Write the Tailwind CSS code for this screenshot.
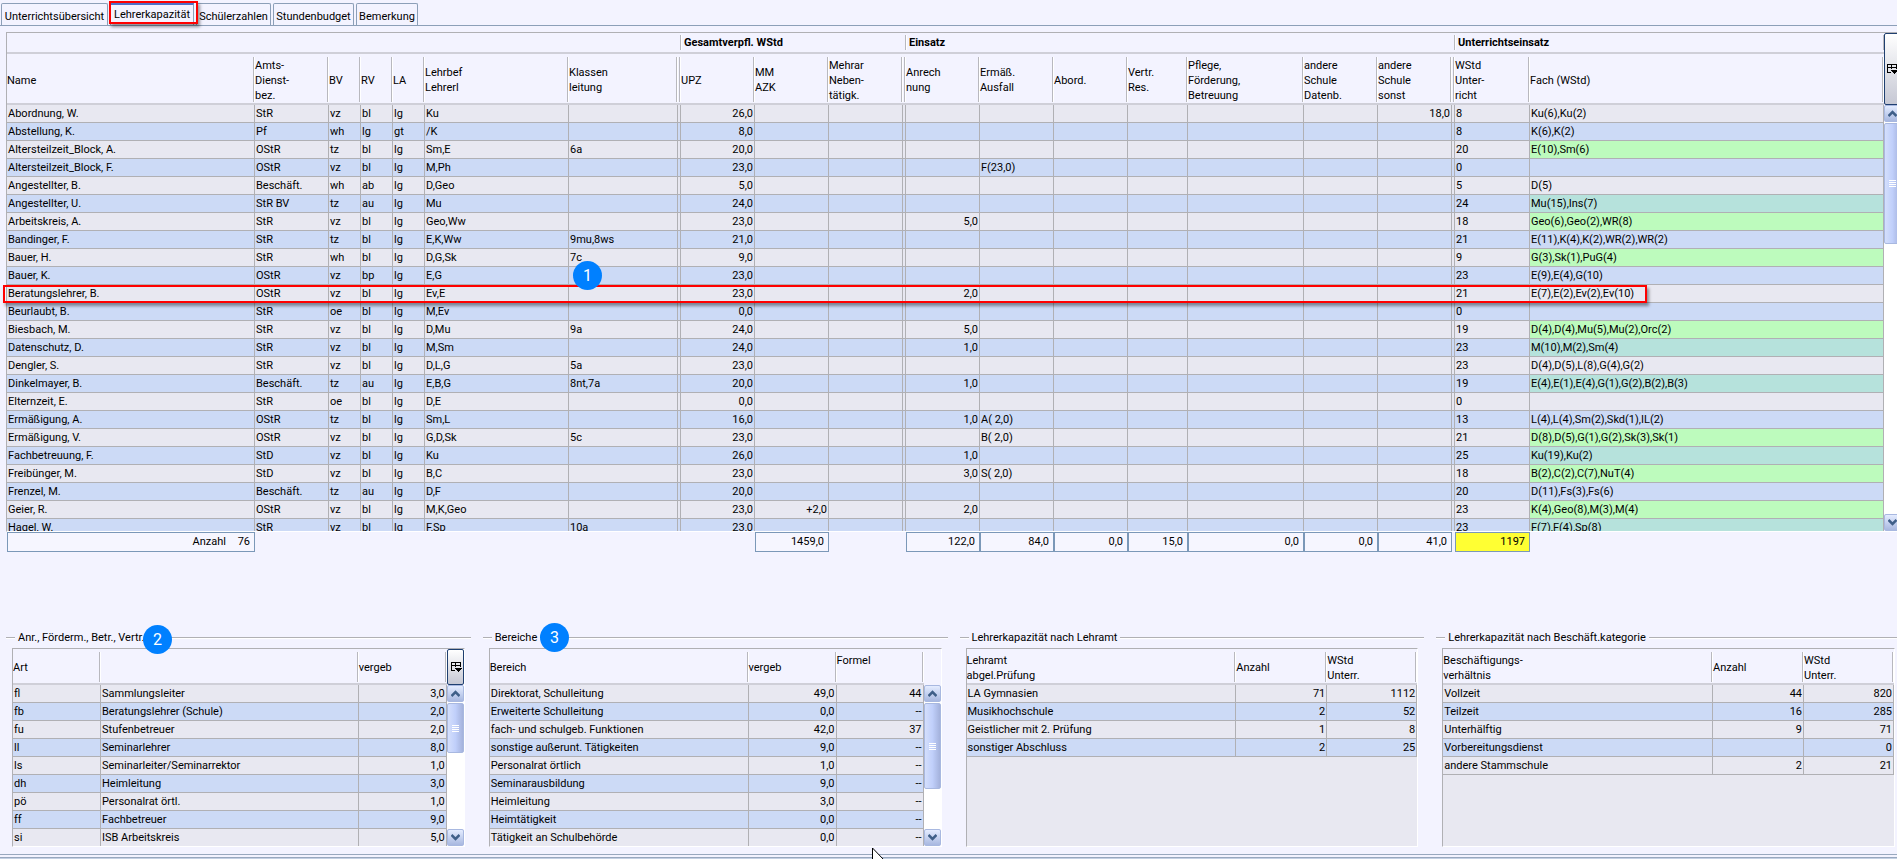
<!DOCTYPE html>
<html lang="de">
  <head>
    <meta charset="UTF-8" />
    <meta name="viewport" content="width=device-width, initial-scale=1.0" />
    <title>Lehrerkapazität</title>
    <script src="https://cdn.jsdelivr.net/npm/@tailwindcss/browser@4"></script>
  </head>
  <body class="min-h-screen overflow-hidden bg-[#f3f3ff] font-[Roboto,sans-serif] text-[11px] leading-[15px] text-black">
    <div class="relative flex min-h-screen flex-col overflow-hidden">
      <!-- tabs -->
      <div role="tablist" class="flex h-[26px] items-end gap-[2px] border-b border-[#8c9fb8] pl-px">
        <button role="tab" class="h-[22px] w-[107px] rounded-t-xs border border-b-0 border-[#8c9fb8] pt-[3px] whitespace-nowrap">Unterrichtsübersicht</button>
        <div class="relative">
          <button role="tab" aria-selected="true" class="h-[22px] w-[84px] border border-t-2 border-b-0 border-[#8c9fb8] border-t-[#5070c8] pb-[2px] whitespace-nowrap">Lehrerkapazität</button>
          <div class="absolute -top-[2px] -left-px h-[23px] w-[89px] border-2 border-[#f00] shadow-[2px_3px_3px_rgba(0,0,0,0.4)]"></div>
        </div>
        <button role="tab" class="h-[22px] w-[75px] rounded-t-xs border border-b-0 border-[#8c9fb8] pt-[3px] whitespace-nowrap">Schülerzahlen</button>
        <button role="tab" class="h-[22px] w-[81px] rounded-t-xs border border-b-0 border-[#8c9fb8] pt-[3px] whitespace-nowrap">Stundenbudget</button>
        <button role="tab" class="h-[22px] w-[62px] rounded-t-xs border border-b-0 border-[#8c9fb8] pt-[3px] whitespace-nowrap">Bemerkung</button>
      </div>

      <!-- teacher list -->
      <div class="mt-[6px] ml-[6px] flex h-[500px] overflow-hidden border-t border-b border-l border-[#b0b0b4] border-b-white">
        <div class="min-w-0 flex-1">
          <table class="w-full table-fixed border-separate border-spacing-0">
            <colgroup>
              <col class="w-[248px]" /><col class="w-[74px]" /><col class="w-[32px]" /><col class="w-[32px]" /><col class="w-[32px]" /><col class="w-[144px]" /><col class="w-[109px]" />
              <col class="w-[3px]" />
              <col class="w-[74px]" /><col class="w-[74px]" /><col class="w-[74px]" />
              <col class="w-[3px]" />
              <col class="w-[74px]" /><col class="w-[74px]" /><col class="w-[74px]" /><col class="w-[60px]" /><col class="w-[116px]" /><col class="w-[74px]" /><col class="w-[74px]" />
              <col class="w-[3px]" />
              <col class="w-[75px]" /><col />
            </colgroup>
            <thead id="staff-head"></thead>
            <tbody id="staff-body"></tbody>
          </table>
        </div>
        <div class="flex w-[13px] flex-col overflow-hidden">
          <button aria-label="Spalten" class="flex h-[72px] w-[17px] shrink-0 items-center rounded-xs border border-[#1f3f70] bg-linear-to-b from-white to-[#c6c8d4] pl-[2px]">
            <svg class="h-[11px] w-[11px] shrink-0" viewBox="0 0 11 11" shape-rendering="crispEdges"><path d="M0.5 8V.5h9V5M0 3.5h10M4.500 0v5M0 8.500h3.500" fill="none" stroke="#000" /><path d="M3 6h8L7 10z" /></svg>
          </button>
          <div data-scroll="h-[121px]" class="flex w-[17px] flex-1 flex-col"></div>
        </div>
      </div>

      <!-- totals -->
      <div id="totals" class="flex pl-[7px]"></div>

      <!-- summaries -->
      <div class="mt-[78px] -mr-1 ml-[6px] grid grid-cols-4 gap-3">
        <section>
          <h2 data-legend="Anr., Förderm., Betr., Vertr." class="flex items-center"></h2>
          <div class="mt-[3px] mx-[6px] flex h-[199px] overflow-hidden border border-[#b0b0b4] border-r-white border-b-white">
            <div class="min-w-0 flex-1">
              <table class="w-full table-fixed border-separate border-spacing-0">
                <colgroup><col class="w-[88px]" /><col /><col class="w-[88px]" /></colgroup>
                <thead id="art-head"></thead>
                <tbody id="art-body"></tbody>
              </table>
            </div>
            <div class="flex w-[17px] flex-col">
              <button aria-label="Spalten" class="flex h-[36px] shrink-0 items-center rounded-xs border border-[#1f3f70] bg-linear-to-b from-white to-[#c6c8d4] pl-[3px]">
                <svg class="h-[11px] w-[11px] shrink-0" viewBox="0 0 11 11" shape-rendering="crispEdges"><path d="M0.5 8V.5h9V5M0 3.5h10M4.500 0v5M0 8.500h3.500" fill="none" stroke="#000" /><path d="M3 6h8L7 10z" /></svg>
              </button>
              <div data-scroll="h-[50px]" class="flex flex-1 flex-col"></div>
            </div>
          </div>
        </section>
        <section>
          <h2 data-legend="Bereiche" class="flex items-center"></h2>
          <div class="mt-[3px] mx-[6px] flex h-[199px] overflow-hidden border border-[#b0b0b4] border-r-white border-b-white">
            <div class="min-w-0 flex-1">
              <table class="w-full table-fixed border-separate border-spacing-0">
                <colgroup><col /><col class="w-[88px]" /><col class="w-[87px]" /></colgroup>
                <thead id="bereich-head"></thead>
                <tbody id="bereich-body"></tbody>
              </table>
            </div>
            <div class="flex w-[17px] flex-col pt-[36px]">
              <div data-scroll="h-[86px]" class="flex flex-1 flex-col"></div>
            </div>
          </div>
        </section>
        <section>
          <h2 data-legend="Lehrerkapazität nach Lehramt" class="flex items-center"></h2>
          <div class="mt-[3px] mx-[6px] h-[199px] overflow-hidden border border-[#b0b0b4] border-r-white border-b-white bg-[#e8e8f1]">
            <table class="w-full table-fixed border-separate border-spacing-0">
              <colgroup><col /><col class="w-[91px]" /><col class="w-[90px]" /></colgroup>
              <thead id="lehramt-head"></thead>
              <tbody id="lehramt-body"></tbody>
            </table>
          </div>
        </section>
        <section>
          <h2 data-legend="Lehrerkapazität nach Beschäft.kategorie" class="flex items-center"></h2>
          <div class="mt-[3px] mx-[6px] h-[199px] overflow-hidden border border-[#b0b0b4] border-r-white border-b-white bg-[#e8e8f1]">
            <table class="w-full table-fixed border-separate border-spacing-0">
              <colgroup><col /><col class="w-[91px]" /><col class="w-[90px]" /></colgroup>
              <thead id="kategorie-head"></thead>
              <tbody id="kategorie-body"></tbody>
            </table>
          </div>
        </section>
      </div>

      <div class="mt-[7px] h-[4px] border-t border-b border-[#98a8be]"></div>
      <div class="flex-1 bg-[#c4d0e4]"></div>

      <!-- annotations -->
      <div class="absolute top-[285px] left-[3px] h-[18px] w-[1644px] border-2 border-[#f00] shadow-[2px_3px_3px_rgba(0,0,0,0.4)]"></div>
      <div class="absolute top-[261px] left-[573px] flex size-[29px] items-center justify-center rounded-full bg-[#0080ff] text-base text-white">1</div>
      <div class="absolute top-[625px] left-[143px] flex size-[29px] items-center justify-center rounded-full bg-[#0080ff] text-base text-white">2</div>
      <div class="absolute top-[623px] left-[540px] flex size-[29px] items-center justify-center rounded-full bg-[#0080ff] text-base text-white">3</div>
      <svg class="absolute top-[847px] left-[872px] h-[19px] w-[12px]" viewBox="0 0 12 19"><path d="M.5 1v16l4-4 2.500 5.500 2-1-2.500-5h5z" fill="#fff" stroke="#000" /></svg>
    </div>

    <script>
      const byId = (id) => document.getElementById(id);

      // header cell with the short separator on its right side
      const th = (text, size) => `
        <th class="bg-[#f3f3ff] p-0 pb-px text-left font-normal border-b-2 border-[#cfcfd8]">
          <div class="mt-[3px] mr-px flex ${size} items-center border-r border-[#b8b8be] pt-px whitespace-pre-line shadow-[1px_0_0_#fff]">${text}</div>
        </th>`;

      const td = (text, right, extra = "") =>
        `<td class="h-[18px] p-0 pt-px overflow-hidden border-r border-b border-[#b0b0b4] whitespace-pre leading-[16px] ${right ? "text-right pr-px" : "pl-px"} ${extra}">${text}</td>`;

      const rowColor = (i) => (i % 2 ? "bg-[#ccdaf6]" : "bg-[#e8e8f1]");

      // teacher list
      const groups = [["", 8], ["Gesamtverpfl. WStd", 4], ["Einsatz", 8], ["Unterrichtseinsatz", 2]];
      const heads = ["Name", "Amts-\nDienst-\nbez.", "BV", "RV", "LA", "Lehrbef\nLehrerl", "Klassen\nleitung", "", "UPZ", "MM\nAZK", "Mehrar\nNeben-\ntätigk.", "",
        "Anrech\nnung", "Ermäß.\nAusfall", "Abord.", "Vertr.\nRes.", "Pflege,\nFörderung,\nBetreuung", "andere\nSchule\nDatenb.", "andere\nSchule\nsonst", "", "WStd\nUnter-\nricht", "Fach (WStd)"];
      byId("staff-head").innerHTML =
        "<tr>" + groups.map(([t, n]) => `
          <th colspan="${n}" class="p-0 pb-[2px] text-left font-bold border-b-2 border-[#cfcfd8]">
            <div class="mt-[2px] flex h-[15px] items-center border-r border-[#b8b8be] pl-[3px] shadow-[1px_0_0_#fff]">${t}</div>
          </th>`).join("") + "</tr>" +
        "<tr>" + heads.map((t) => th(t, "h-[45px]")).join("") + "</tr>";

      // name, rank, BV, RV, LA, subjects, class, UPZ, MM, Anrechnung, Ermäßigung, sonst, WStd, Fach, marked
      const staff = [
        ["Abordnung, W.", "StR", "vz", "bl", "lg", "Ku", "", "26,0", "", "", "", "18,0", "8", "Ku(6),Ku(2)", 0],
        ["Abstellung, K.", "Pf", "wh", "lg", "gt", "/K", "", "8,0", "", "", "", "", "8", "K(6),K(2)", 0],
        ["Altersteilzeit_Block, A.", "OStR", "tz", "bl", "lg", "Sm,E", "6a", "20,0", "", "", "", "", "20", "E(10),Sm(6)", 1],
        ["Altersteilzeit_Block, F.", "OStR", "vz", "bl", "lg", "M,Ph", "", "23,0", "", "", "F(23,0)", "", "0", "", 0],
        ["Angestellter, B.", "Beschäft.", "wh", "ab", "lg", "D,Geo", "", "5,0", "", "", "", "", "5", "D(5)", 0],
        ["Angestellter, U.", "StR BV", "tz", "au", "lg", "Mu", "", "24,0", "", "", "", "", "24", "Mu(15),Ins(7)", 1],
        ["Arbeitskreis, A.", "StR", "vz", "bl", "lg", "Geo,Ww", "", "23,0", "", "5,0", "", "", "18", "Geo(6),Geo(2),WR(8)", 1],
        ["Bandinger, F.", "StR", "tz", "bl", "lg", "E,K,Ww", "9mu,8ws", "21,0", "", "", "", "", "21", "E(11),K(4),K(2),WR(2),WR(2)", 0],
        ["Bauer, H.", "StR", "wh", "bl", "lg", "D,G,Sk", "7c", "9,0", "", "", "", "", "9", "G(3),Sk(1),PuG(4)", 1],
        ["Bauer, K.", "OStR", "vz", "bp", "lg", "E,G", "", "23,0", "", "", "", "", "23", "E(9),E(4),G(10)", 0],
        ["Beratungslehrer, B.", "OStR", "vz", "bl", "lg", "Ev,E", "", "23,0", "", "2,0", "", "", "21", "E(7),E(2),Ev(2),Ev(10)", 0],
        ["Beurlaubt, B.", "StR", "oe", "bl", "lg", "M,Ev", "", "0,0", "", "", "", "", "0", "", 0],
        ["Biesbach, M.", "StR", "vz", "bl", "lg", "D,Mu", "9a", "24,0", "", "5,0", "", "", "19", "D(4),D(4),Mu(5),Mu(2),Orc(2)", 1],
        ["Datenschutz, D.", "StR", "vz", "bl", "lg", "M,Sm", "", "24,0", "", "1,0", "", "", "23", "M(10),M(2),Sm(4)", 1],
        ["Dengler, S.", "StR", "vz", "bl", "lg", "D,L,G", "5a", "23,0", "", "", "", "", "23", "D(4),D(5),L(8),G(4),G(2)", 0],
        ["Dinkelmayer, B.", "Beschäft.", "tz", "au", "lg", "E,B,G", "8nt,7a", "20,0", "", "1,0", "", "", "19", "E(4),E(1),E(4),G(1),G(2),B(2),B(3)", 1],
        ["Elternzeit, E.", "StR", "oe", "bl", "lg", "D,E", "", "0,0", "", "", "", "", "0", "", 0],
        ["Ermäßigung, A.", "OStR", "tz", "bl", "lg", "Sm,L", "", "16,0", "", "1,0", "A( 2,0)", "", "13", "L(4),L(4),Sm(2),Skd(1),IL(2)", 0],
        ["Ermäßigung, V.", "OStR", "vz", "bl", "lg", "G,D,Sk", "5c", "23,0", "", "", "B( 2,0)", "", "21", "D(8),D(5),G(1),G(2),Sk(3),Sk(1)", 1],
        ["Fachbetreuung, F.", "StD", "vz", "bl", "lg", "Ku", "", "26,0", "", "1,0", "", "", "25", "Ku(19),Ku(2)", 1],
        ["Freibünger, M.", "StD", "vz", "bl", "lg", "B,C", "", "23,0", "", "3,0", "S( 2,0)", "", "18", "B(2),C(2),C(7),NuT(4)", 1],
        ["Frenzel, M.", "Beschäft.", "tz", "au", "lg", "D,F", "", "20,0", "", "", "", "", "20", "D(11),Fs(3),Fs(6)", 0],
        ["Geier, R.", "OStR", "vz", "bl", "lg", "M,K,Geo", "", "23,0", "+2,0", "2,0", "", "", "23", "K(4),Geo(8),M(3),M(4)", 1],
        ["Hagel, W.", "StR", "vz", "bl", "lg", "F,Sp", "10a", "23,0", "", "", "", "", "23", "F(7),F(4),Sp(8)", 1],
      ];
      byId("staff-body").innerHTML = staff.map((r, i) => {
        const mark = r[14] ? (i % 2 ? "bg-[#b6e2dc]" : "bg-[#bdfbbd]") : "";
        return `<tr class="${rowColor(i)}">` +
          r.slice(0, 7).map((t) => td(t)).join("") + td("") +
          td(r[7], 1) + td(r[8], 1) + td("") + td("") +
          td(r[9], 1) + td(r[10]) + td("") + td("") + td("") + td("") + td(r[11], 1) + td("") +
          td(r[12]) + td(r[13], 0, mark) + "</tr>";
      }).join("");

      // totals, a missing label is a gap
      const totals = [
        ["Anzahl", "76", "w-[248px]"], [, , "w-[500px]"], ["MM AZK", "1459,0", "w-[74px]"], [, , "w-[77px]"],
        ["Anrechnung", "122,0", "w-[74px]"], ["Ermäßigung", "84,0", "w-[74px]"], ["Abordnung", "0,0", "w-[74px]"], ["Vertretung", "15,0", "w-[60px]"],
        ["Pflege", "0,0", "w-[116px]"], ["Schule Datenbank", "0,0", "w-[74px]"], ["Schule sonst", "41,0", "w-[74px]"], [, , "w-[3px]"], ["Unterricht", "1197", "w-[75px]"],
      ];
      byId("totals").innerHTML = totals.map(([label, value, w], i) => {
        if (!label) return `<div class="${w}"></div>`;
        if (i === 0) return `
          <div class="${w} flex h-5 items-center justify-end border border-[#7b98b8] bg-[#f6f6ff] pr-1 pb-px">
            <label for="total-0">Anzahl</label><input id="total-0" readonly value="${value}" class="w-6 text-right" />
          </div>`;
        return `<input aria-label="${label}" readonly value="${value}" class="${w} h-5 border border-[#7b98b8] pr-1 pb-px text-right ${value === "1197" ? "bg-[#ffff33]" : "bg-[#f6f6ff]"}" />`;
      }).join("");

      // small tables
      function fill(name, head, rows, rightFrom) {
        byId(name + "-head").innerHTML = "<tr>" + head.map((t) => th(t, "h-[30px]")).join("") + "</tr>";
        byId(name + "-body").innerHTML = rows.map((r, i) =>
          `<tr class="${rowColor(i)}">` + r.map((t, c) => td(t, c >= rightFrom)).join("") + "</tr>").join("");
      }
      fill("art", ["Art", "", "vergeb"], [
        ["fl", "Sammlungsleiter", "3,0"],
        ["fb", "Beratungslehrer (Schule)", "2,0"],
        ["fu", "Stufenbetreuer", "2,0"],
        ["ll", "Seminarlehrer", "8,0"],
        ["ls", "Seminarleiter/Seminarrektor", "1,0"],
        ["dh", "Heimleitung", "3,0"],
        ["pö", "Personalrat örtl.", "1,0"],
        ["ff", "Fachbetreuer", "9,0"],
        ["si", "ISB Arbeitskreis", "5,0"],
      ], 2);
      fill("bereich", ["Bereich", "vergeb", "Formel\n&nbsp;"], [
        ["Direktorat, Schulleitung", "49,0", "44"],
        ["Erweiterte Schulleitung", "0,0", "--"],
        ["fach- und schulgeb. Funktionen", "42,0", "37"],
        ["sonstige außerunt. Tätigkeiten", "9,0", "--"],
        ["Personalrat örtlich", "1,0", "--"],
        ["Seminarausbildung", "9,0", "--"],
        ["Heimleitung", "3,0", "--"],
        ["Heimtätigkeit", "0,0", "--"],
        ["Tätigkeit an Schulbehörde", "0,0", "--"],
      ], 1);
      fill("lehramt", ["Lehramt\nabgel.Prüfung", "Anzahl", "WStd\nUnterr."], [
        ["LA Gymnasien", "71", "1112"],
        ["Musikhochschule", "2", "52"],
        ["Geistlicher mit 2. Prüfung", "1", "8"],
        ["sonstiger Abschluss", "2", "25"],
      ], 1);
      fill("kategorie", ["Beschäftigungs-\nverhältnis", "Anzahl", "WStd\nUnterr."], [
        ["Vollzeit", "44", "820"],
        ["Teilzeit", "16", "285"],
        ["Unterhälftig", "9", "71"],
        ["Vorbereitungsdienst", "", "0"],
        ["andere Stammschule", "2", "21"],
      ], 1);

      document.querySelectorAll("[data-legend]").forEach((el) => {
        el.innerHTML = `
          <span class="h-[2px] w-[9px] border-t border-[#b0b0b4] border-b border-b-white"></span>
          <span class="px-[3px] whitespace-nowrap">${el.dataset.legend}</span>
          <span class="h-[2px] flex-1 border-t border-[#b0b0b4] border-b border-b-white"></span>`;
      });

      // scroll bars
      const arrow = (label, d) => `
        <button aria-label="${label}" class="flex h-[17px] shrink-0 items-center justify-center rounded-xs border border-[#a8b8e0] bg-linear-to-b from-[#e4ecff] to-[#a8b8e0]">
          <svg class="h-[7px] w-[9px]" viewBox="0 0 9 7"><path d="${d}" fill="none" stroke="#3f5f88" stroke-width="2.500" /></svg>
        </button>`;
      document.querySelectorAll("[data-scroll]").forEach((el) => {
        el.innerHTML = arrow("Nach oben", "M.5 6 4.500 2l4 4") + `
          <div class="flex-1 bg-white">
            <div class="${el.dataset.scroll} mt-px flex flex-col items-center justify-center gap-px rounded-xs border border-[#a8b8e0] bg-linear-to-r from-[#d4dffc] via-[#c0cffa] to-[#a4b2dc]">
              <span class="h-px w-[7px] bg-white"></span><span class="h-px w-[7px] bg-white"></span><span class="h-px w-[7px] bg-white"></span><span class="h-px w-[7px] bg-white"></span>
            </div>
          </div>` + arrow("Nach unten", "M.5 1 4.500 5l4-4");
      });
    </script>
  </body>
</html>
